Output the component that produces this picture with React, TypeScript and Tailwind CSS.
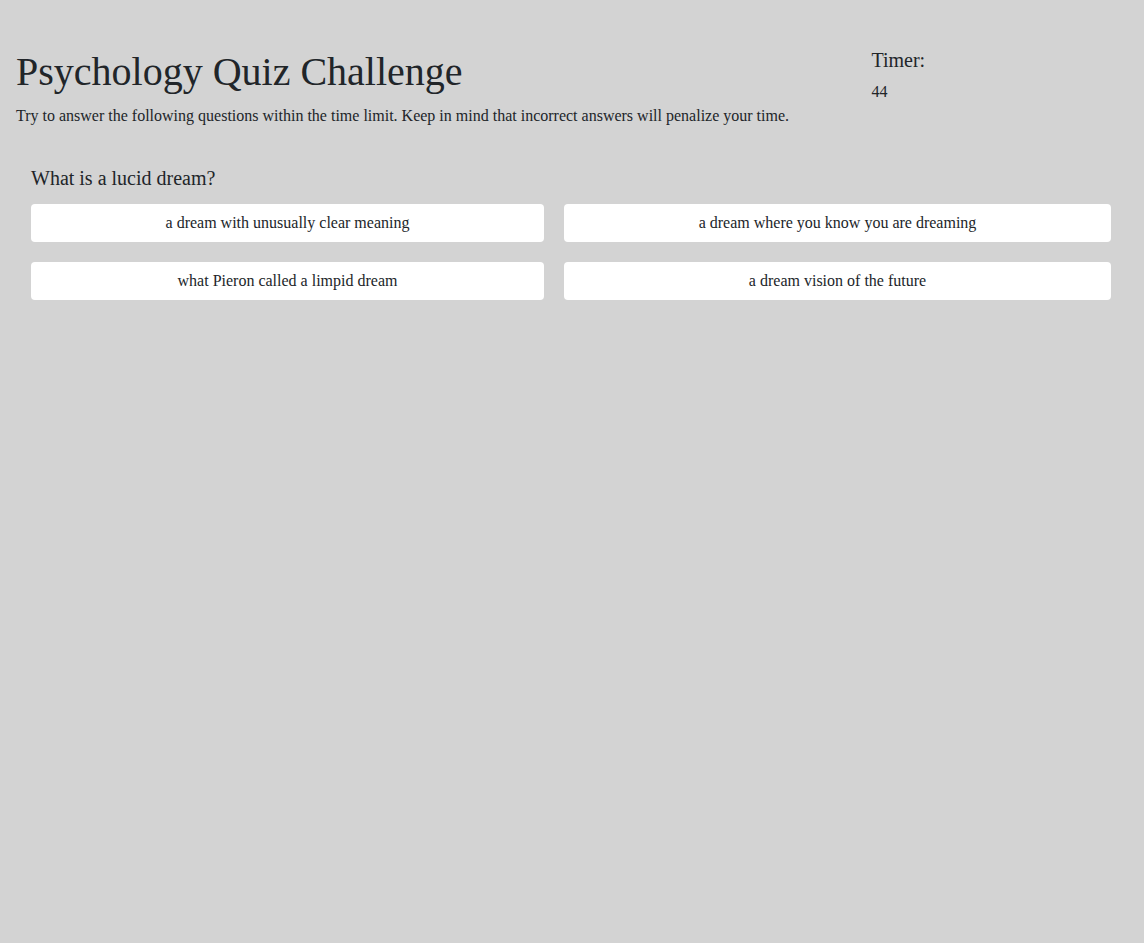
const answers = [
  'a dream with unusually clear meaning',
  'a dream where you know you are dreaming',
  'what Pieron called a limpid dream',
  'a dream vision of the future',
];

export default function App() {
  return (
    <div className="min-h-screen bg-[#d3d3d3] px-4 pt-12 font-['Liberation_Serif',serif] text-base text-[#212529]">
      <header className="grid grid-cols-[10fr_3fr]">
        <div>
          <h1 className="mb-2 text-[40px] leading-12">Psychology Quiz Challenge</h1>
          <p>Try to answer the following questions within the time limit. Keep in mind that incorrect answers will penalize your time.</p>
        </div>
        <div>
          <h2 className="mb-2 text-xl leading-6">Timer:</h2>
          <p role="timer">44</p>
        </div>
      </header>
      <main className="mt-[38px] pr-[17px] pl-[15px]">
        <h2 className="text-xl leading-6">What is a lucid dream?</h2>
        <div className="mt-[14px] grid grid-cols-[513fr_547fr] gap-5">
          {answers.map((answer) => (
            <button
              key={answer}
              type="button"
              className="min-h-[38px] cursor-pointer rounded bg-white px-3 text-center"
            >
              {answer}
            </button>
          ))}
        </div>
      </main>
    </div>
  );
}
